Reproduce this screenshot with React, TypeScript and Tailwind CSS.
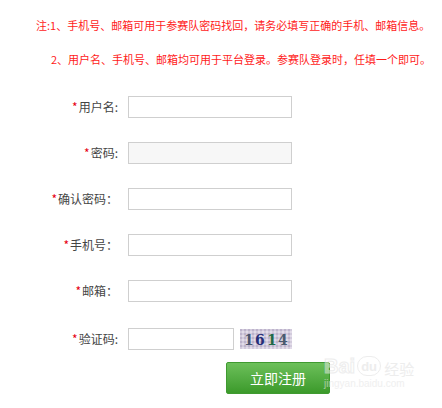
import React from "react";

interface Field {
  label: string;
  grey?: boolean;
}

const fields: Field[] = [
  { label: "用户名:" },
  { label: "密码:", grey: true },
  { label: "确认密码：" },
  { label: "手机号：" },
  { label: "邮箱：" },
];

const Captcha = () => (
  <svg width="52" height="20" viewBox="0 0 52 20" className="block">
    <defs>
      <pattern id="noise" width="4" height="4" patternUnits="userSpaceOnUse">
        <rect width="2" height="2" fill="#bdb3cc" />
        <rect x="2" y="2" width="2" height="2" fill="#e2dbe9" />
      </pattern>
    </defs>
    <rect width="52" height="20" fill="#d2cbdc" />
    <rect width="52" height="20" fill="url(#noise)" />
    <text x="4" y="16" fontFamily="'DejaVu Serif', serif" fontSize="14" fontWeight="bold" fill="#4a5470">1</text>
    <text x="15" y="16" fontFamily="'DejaVu Serif', serif" fontSize="14" fontWeight="bold" fill="#262e78">6</text>
    <text x="27" y="16" fontFamily="'DejaVu Serif', serif" fontSize="14" fontWeight="bold" fill="#1f6a4a">1</text>
    <text x="38" y="16" fontFamily="'DejaVu Serif', serif" fontSize="14" fontWeight="bold" fill="#4a5a70">4</text>
  </svg>
);

const Row = ({ label, grey, children }: { label: string; grey?: boolean; children?: React.ReactNode }) => (
  <div className="flex items-center h-[22px]">
    <div className="w-[120px] text-right text-[12px] text-[#444] pr-[2px]">
      <span className="text-[#e60012] text-[12px] mr-[1px]">*</span>
      {label}
    </div>
    <div className="ml-[8px] flex items-center">
      {children ?? (
        <div className={`w-[164px] h-[22px] border border-[#cfcfcf] ${grey ? "bg-[#f7f7f7]" : "bg-white"}`} />
      )}
    </div>
  </div>
);

export default function App() {
  return (
    <div
      className="relative w-[442px] h-[408px] bg-white overflow-hidden"
      style={{ fontFamily: "'Noto Sans CJK SC', 'Noto Sans', sans-serif" }}
    >
      {/* Notes */}
      <div className="pt-[8px] text-[11px] text-[#ff1a1a] whitespace-nowrap">
        <div className="h-[34px] leading-[34px] pl-[36px]">注:1、手机号、邮箱可用于参赛队密码找回，请务必填写正确的手机、邮箱信息。</div>
        <div className="h-[34px] leading-[34px] pl-[51px]">2、用户名、手机号、邮箱均可用于平台登录。参赛队登录时，任填一个即可。</div>
      </div>

      {/* Form */}
      <div className="mt-[20px] flex flex-col gap-[24px]">
        {fields.map((f) => (
          <Row key={f.label} label={f.label} grey={f.grey} />
        ))}
      </div>
      <div className="mt-[26px]">
        <Row label="验证码:">
          <div className="w-[106px] h-[22px] border border-[#cfcfcf] bg-white" />
          <div className="ml-[6px]">
            <Captcha />
          </div>
        </Row>
      </div>

      <div className="mt-[12px] pl-[226px]">
        <button className="w-[104px] h-[32px] rounded-[2px] bg-gradient-to-b from-[#6cc05a] to-[#3b9a2a] text-white text-[14px] border border-[#3f9a30]">
          立即注册
        </button>
      </div>

      {/* Baidu watermark */}
      <div className="absolute left-[324px] top-[356px] select-none pointer-events-none opacity-60">
        <div className="flex items-end leading-none">
          <span className="text-[20px] font-bold text-white/70 [-webkit-text-stroke:1px_#e2e2e2]" style={{ fontFamily: "'Liberation Sans', sans-serif" }}>Bai</span>
          <span className="ml-[2px] w-[24px] h-[20px] rounded-full border border-[#e2e2e2] text-[13px] font-bold text-[#e2e2e2] flex items-center justify-center" style={{ fontFamily: "'Liberation Sans', sans-serif" }}>du</span>
          <span className="ml-[3px] text-[15px] text-[#e2e2e2]">经验</span>
        </div>
        <div className="mt-[3px] text-[10px] text-[#e6e6e6] leading-none" style={{ fontFamily: "'Liberation Sans', sans-serif" }}>jingyan.baidu.com</div>
      </div>
    </div>
  );
}
